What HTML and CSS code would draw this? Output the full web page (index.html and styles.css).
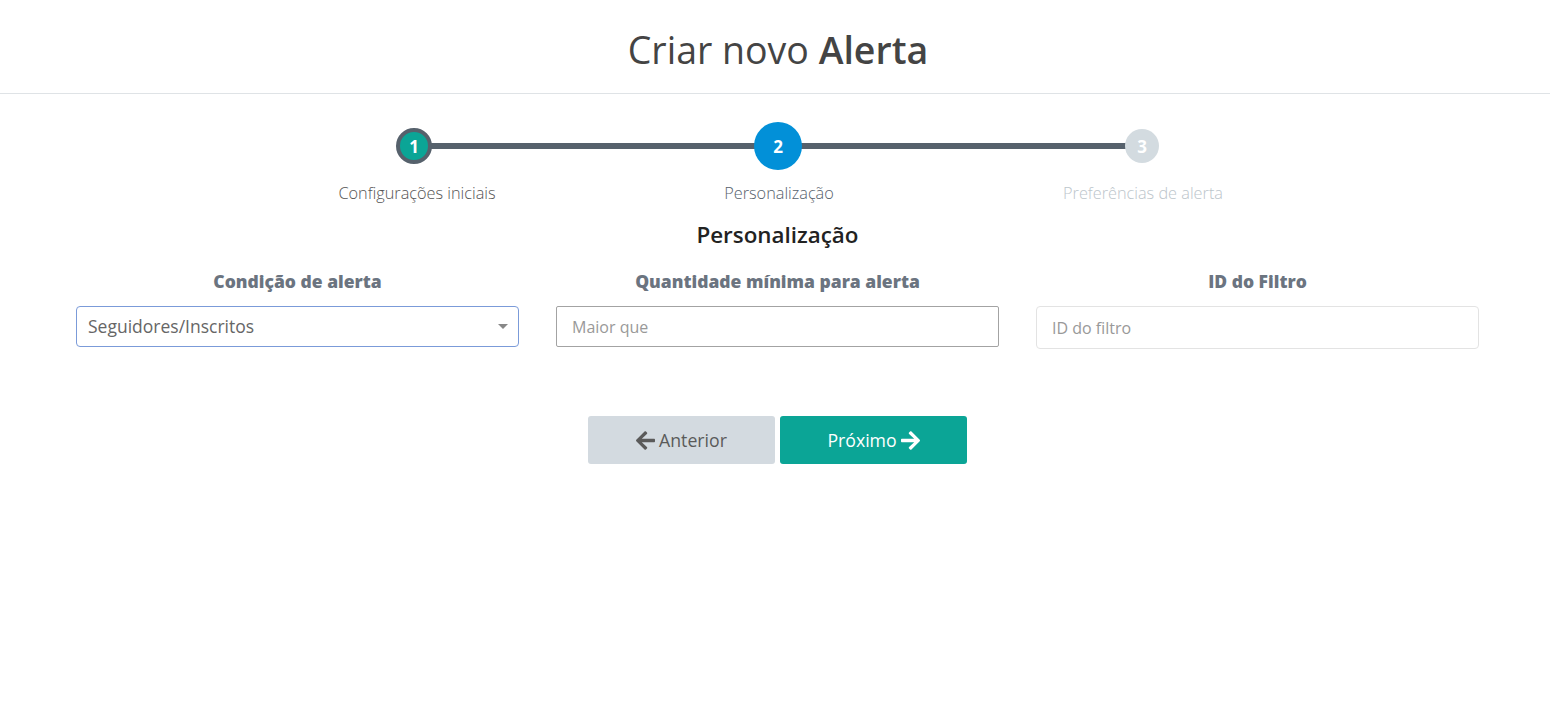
FILE: index.html
```html
<!DOCTYPE html>
<html lang="pt">
<head>
<meta charset="utf-8">
<title>Criar novo Alerta</title>
<link rel="stylesheet" href="styles.css">
</head>
<body>
<header class="header">
  <h1 class="title">Criar novo <strong>Alerta</strong></h1>
</header>
<main class="main">
  <div class="stepper">
    <div class="step step-done">
      <div class="step-track">
        <span class="line line-right"></span>
        <span class="circle">1</span>
      </div>
      <div class="step-label">Configurações iniciais</div>
    </div>
    <div class="step step-active">
      <div class="step-track">
        <span class="line line-left"></span>
        <span class="line line-right"></span>
        <span class="circle">2</span>
      </div>
      <div class="step-label">Personalização</div>
    </div>
    <div class="step step-todo">
      <div class="step-track">
        <span class="line line-left"></span>
        <span class="circle">3</span>
      </div>
      <div class="step-label">Preferências de alerta</div>
    </div>
  </div>

  <h2 class="section-title">Personalização</h2>

  <div class="fields">
    <div class="field">
      <label class="field-label">Condição de alerta</label>
      <div class="select">
        <span class="select-value">Seguidores/Inscritos</span>
        <span class="caret"></span>
      </div>
    </div>
    <div class="field">
      <label class="field-label">Quantidade mínima para alerta</label>
      <input class="input input-square" type="text" placeholder="Maior que">
    </div>
    <div class="field">
      <label class="field-label">ID do Filtro</label>
      <input class="input input-soft" type="text" placeholder="ID do filtro">
    </div>
  </div>

  <div class="actions">
    <button class="btn btn-prev" type="button">
      <svg class="arrow" viewBox="0 0 448 448" width="19" height="19"><path fill="currentColor" d="M257.5 413.1l-22.2 22.2c-9.4 9.4-24.6 9.4-33.9 0L7 241c-9.4-9.4-9.4-24.6 0-33.9L201.4 12.7c9.4-9.4 24.6-9.4 33.9 0l22.2 22.2c9.5 9.5 9.3 25-.4 34.3L136.6 184H424c13.3 0 24 10.7 24 24v32c0 13.3-10.7 24-24 24H136.6l120.5 114.8c9.8 9.3 10 24.8.4 34.3z"/></svg>Anterior
    </button>
    <button class="btn btn-next" type="button">
      Próximo<svg class="arrow" viewBox="0 0 448 448" width="19" height="19"><path fill="currentColor" d="M190.5 34.9l22.2-22.2c9.4-9.4 24.6-9.4 33.9 0L441 207c9.4 9.4 9.4 24.6 0 33.9L246.6 435.3c-9.4 9.4-24.6 9.4-33.9 0l-22.2-22.2c-9.5-9.5-9.3-25 .4-34.3L311.4 264H24c-13.3 0-24-10.7-24-24v-32c0-13.3 10.7-24 24-24h287.4L190.9 69.2c-9.8-9.3-10-24.8-.4-34.3z"/></svg>
    </button>
  </div>
</main>
</body>
</html>
```

FILE: styles.css
```css
* { box-sizing: border-box; }

html, body {
  margin: 0;
  padding: 0;
  background: #fff;
  font-family: "Open Sans", "Liberation Sans", sans-serif;
  color: #444;
}

.header {
  border-bottom: 1px solid #dfe3e6;
  height: 94px;
  display: flex;
  align-items: center;
  justify-content: center;
}

.title {
  margin: 0;
  font-size: 37.5px;
  font-weight: 400;
  color: #444;
  padding-left: 6px;
  padding-top: 6px;
}

.title strong { font-weight: 600; }

.main {
  padding: 28px 71px 0 76px;
}

.stepper {
  display: flex;
  justify-content: center;
  margin-left: 156px;
  margin-right: 155px;
}

.step {
  flex: 1 1 0;
  display: flex;
  flex-direction: column;
  align-items: center;
}

.step-track {
  position: relative;
  width: 100%;
  height: 48px;
  display: flex;
  align-items: center;
  justify-content: center;
}

.line {
  position: absolute;
  top: 21px;
  height: 6px;
  background: #56616c;
}

.line-left { left: 0; right: 50%; }
.line-right { left: 50%; right: 0; }

.circle {
  position: relative;
  z-index: 1;
  display: flex;
  align-items: center;
  justify-content: center;
  border-radius: 50%;
  color: #fff;
  font-weight: 700;
  font-size: 17px;
}

.step-done .circle {
  width: 36px;
  height: 36px;
  background: #0ba596;
  border: 4px solid #56616c;
}

.step-active .circle {
  width: 48px;
  height: 48px;
  background: #0290d8;
}

.step-todo .circle {
  width: 34px;
  height: 34px;
  background: #d3dbe0;
}

.step-label {
  margin-top: 13px;
  font-size: 16.3px;
  font-weight: 300;
  line-height: 20px;
}

.step-done .step-label { color: #555; padding-left: 6px; }
.step-active .step-label { color: #56616c; padding-left: 2px; }
.step-todo .step-label { color: #bcc5cb; padding-left: 2px; }

.section-title {
  margin: 17px 0 0;
  text-align: center;
  font-size: 22.4px;
  font-weight: 600;
  color: #222;
  line-height: 30px;
}

.fields {
  margin-top: 19px;
  display: grid;
  grid-template-columns: repeat(3, 443px);
  column-gap: 37px;
}

.field {
  display: flex;
  flex-direction: column;
}

.field-label {
  text-align: center;
  font-size: 17.5px;
  font-weight: 800;
  color: #6b7480;
  line-height: 24px;
  margin-bottom: 13px;
}

.select {
  height: 41px;
  border: 1px solid #7b9bd9;
  border-radius: 4px;
  display: flex;
  align-items: center;
  justify-content: space-between;
  padding: 0 10px 2px 11px;
  font-size: 17.5px;
  color: #666;
}

.caret {
  width: 0;
  height: 0;
  border-left: 5px solid transparent;
  border-right: 5px solid transparent;
  border-top: 5px solid #888;
  margin-top: 2px;
}

.input {
  height: 41px;
  font-family: inherit;
  font-size: 16px;
  padding: 0 15px;
  color: #555;
  outline: none;
  background: #fff;
}

.input::placeholder { color: #999; }

.input-square {
  border: 1px solid #a3a3a3;
  border-radius: 2px;
}

.input-soft {
  height: 43px;
  border: 1px solid #e3e3e3;
  border-radius: 4px;
}

.actions {
  margin-top: 67px;
  display: flex;
  justify-content: center;
  gap: 5px;
}

.btn {
  width: 187px;
  height: 48px;
  border: none;
  border-radius: 3px;
  font-family: inherit;
  font-size: 17.7px;
  display: flex;
  align-items: center;
  justify-content: center;
  gap: 4px;
  cursor: pointer;
}

.btn-prev {
  background: #d3dae0;
  color: #5a5a5a;
}

.btn-next {
  background: #0ba596;
  color: #fff;
}

.arrow { display: block; }
```
